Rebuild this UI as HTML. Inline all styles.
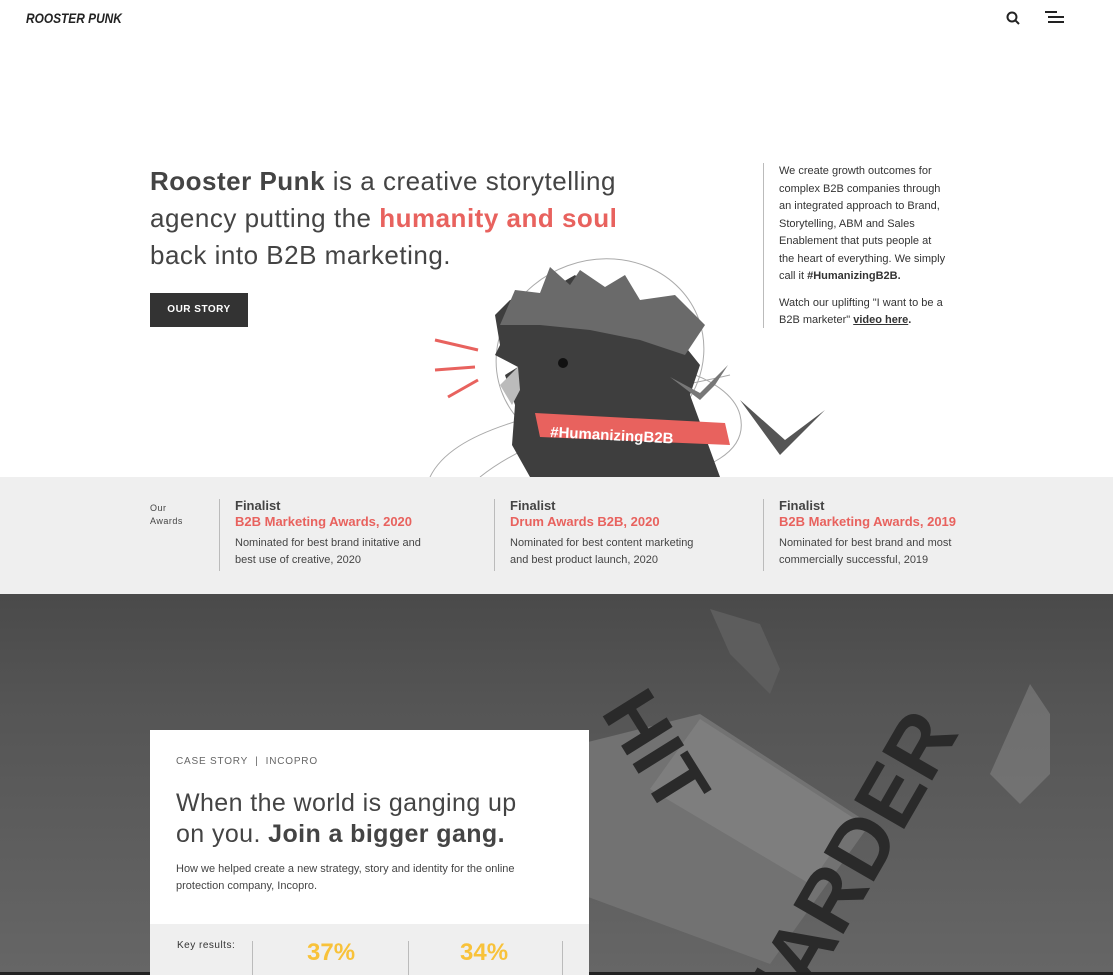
<!DOCTYPE html>
<html><head><meta charset="utf-8"><style>
*{margin:0;padding:0;box-sizing:border-box}
html{width:1113px;height:975px;overflow:hidden}
body{width:1113px;height:975px;overflow:hidden;background:#fff;font-family:"Liberation Sans",sans-serif;color:#444;position:relative}
.abs{position:absolute}
.logo{left:26px;top:10px;font-weight:bold;font-style:italic;font-size:14px;color:#222;transform:scaleX(.85);transform-origin:left}
h1{position:absolute;left:150px;top:163px;font-size:26px;font-weight:normal;line-height:37px;color:#444;white-space:nowrap;letter-spacing:.5px}
h1 b{font-weight:bold}
.red{color:#e8625e}
.btn{left:150px;top:293px;width:98px;height:34px;background:#333;color:#fff;font-size:10px;font-weight:bold;text-align:center;line-height:34px;letter-spacing:.5px}
.side{left:763px;top:163px;border-left:1px solid #bbb;padding-left:15px;width:210px;height:165px;font-size:11px;line-height:17.5px;color:#333;white-space:nowrap}
.awards{left:0;top:477px;width:1113px;height:117px;background:#efefef}
.aw{position:absolute;top:22px;border-left:1px solid #bbb;padding-left:15px;height:72px;font-size:11px;line-height:17px;color:#444;white-space:nowrap}
.aw .t{font-size:13px;font-weight:bold;color:#444;line-height:16px;margin-top:-1px}
.aw .s{font-size:13px;font-weight:bold;color:#e8625e;line-height:16px;margin-bottom:5px}
.dark{left:0;top:594px;width:1113px;height:381px;background:linear-gradient(180deg,#4a4a4a 0,#555 30%,#666 100%)}
.card{left:150px;top:730px;width:439px;height:245px;background:#fff;overflow:hidden}
.kr{left:150px;top:924px;width:439px;height:51px;background:#efefef;overflow:hidden}
</style></head><body>
<div class="abs logo">ROOSTER PUNK</div>
<svg class="abs" style="left:1005px;top:10px" width="16" height="16" viewBox="0 0 16 16"><circle cx="7" cy="7" r="4.5" fill="none" stroke="#222" stroke-width="2"/><line x1="10" y1="10" x2="14" y2="14" stroke="#222" stroke-width="2"/></svg>
<svg class="abs" style="left:1045px;top:10px" width="20" height="14"><rect x="0" y="1" width="12" height="2" fill="#222"/><rect x="3" y="6" width="16" height="2" fill="#222"/><rect x="3" y="11" width="16" height="2" fill="#222"/></svg>

<h1><b>Rooster Punk</b> is a creative storytelling<br>agency putting the <b class="red">humanity and soul</b><br>back into B2B marketing.</h1>
<div class="abs btn">OUR STORY</div>
<div class="abs side">We create growth outcomes for<br>complex B2B companies through<br>an integrated approach to Brand,<br>Storytelling, ABM and Sales<br>Enablement that puts people at<br>the heart of everything. We simply<br>call it <b>#HumanizingB2B.</b><div style="margin-top:9px">Watch our uplifting "I want to be a<br>B2B marketer" <b><u>video here</u>.</b></div></div>

<svg class="abs" style="left:400px;top:255px" width="460" height="222" viewBox="0 0 460 222">
<g fill="none" stroke="#aaa" stroke-width="1">
<ellipse cx="200" cy="100" rx="105" ry="95" transform="rotate(-20 200 100)"/>
<path d="M30 222 C60 160 200 150 330 120"/>
<path d="M180 130 C240 90 330 120 340 160 C350 200 300 215 270 222"/>
<path d="M80 222 C120 190 180 170 230 160"/>
</g>
<path d="M100 90 L95 60 L110 45 L140 40 L175 20 L200 45 L260 60 L300 110 L290 140 L320 222 L130 222 L112 190 L115 150 L105 120 L118 112 L95 100 Z" fill="#3e3e3e"/>
<path d="M100 70 L115 35 L140 38 L150 12 L170 30 L180 15 L205 32 L225 20 L240 45 L275 40 L305 70 L285 100 L240 85 L190 75 L140 70 Z" fill="#6a6a6a"/>
<path d="M118 112 L100 130 L112 150 L120 135 Z" fill="#bbb"/>
<circle cx="163" cy="108" r="5" fill="#111"/>
<g stroke="#e8625e" stroke-width="3"><line x1="78" y1="95" x2="35" y2="85"/><line x1="75" y1="112" x2="35" y2="115"/><line x1="78" y1="125" x2="48" y2="142"/></g>
<path d="M135 158 L325 168 L330 190 L140 182 Z" fill="#e8625e"/>
<text x="150" y="182" font-family="Liberation Sans" font-weight="bold" font-size="15" fill="#fff" transform="rotate(3 150 182)">#HumanizingB2B</text>
<path d="M270 122 L300 138 L328 110 L315 130 L300 145 Z" fill="#777"/>
<path d="M340 145 L380 200 L425 155 L385 185 Z" fill="#555"/>
</svg>

<div class="abs awards">
<div class="abs" style="left:150px;top:25px;font-size:9px;line-height:13px;letter-spacing:.5px">Our<br>Awards</div>
<div class="aw" style="left:219px"><div class="t">Finalist</div><div class="s">B2B Marketing Awards, 2020</div>Nominated for best brand initative and<br>best use of creative, 2020</div>
<div class="aw" style="left:494px"><div class="t">Finalist</div><div class="s">Drum Awards B2B, 2020</div>Nominated for best content marketing<br>and best product launch, 2020</div>
<div class="aw" style="left:763px"><div class="t">Finalist</div><div class="s">B2B Marketing Awards, 2019</div>Nominated for best brand and most<br>commercially successful, 2019</div>
</div>

<div class="abs dark"></div>
<svg class="abs" style="left:580px;top:594px;overflow:hidden" width="533" height="381">
<path d="M0 150 L120 120 L290 230 L190 370 L0 300 Z" fill="#727272"/>
<path d="M120 125 L275 225 L230 290 L70 195 Z" fill="#7e7e7e"/>
<path d="M130 15 L180 30 L200 75 L190 100 L150 60 Z" fill="#5d5d5d"/>
<text x="0" y="0" font-family="Liberation Sans" font-weight="bold" font-size="78" fill="#2a2a2a" transform="translate(20 118) rotate(58)">HIT</text>
<text x="0" y="0" font-family="Liberation Sans" font-weight="bold" font-size="84" fill="#2a2a2a" transform="translate(200 450) rotate(-60)">HARDER</text>
<path d="M450 90 L470 120 L470 180 L440 210 L410 180 Z" fill="#8a8a8a" opacity=".5"/>
</svg>
<div class="abs" style="left:0;top:972px;width:1113px;height:3px;background:#222"></div>

<div class="abs card">
<div class="abs" style="left:26px;top:26px;font-size:10px;letter-spacing:.8px;color:#666">CASE STORY &nbsp;|&nbsp; INCOPRO</div>
<div class="abs" style="left:26px;top:58px;font-size:25px;line-height:31px;color:#444;white-space:nowrap;letter-spacing:.4px">When the world is ganging up<br>on you. <b>Join a bigger gang.</b></div>
<div class="abs" style="left:26px;top:131px;font-size:11px;line-height:17px;color:#444;white-space:nowrap">How we helped create a new strategy, story and identity for the online<br>protection company, Incopro.</div>
</div>
<div class="abs kr">
<div class="abs" style="left:27px;top:16px;font-size:10px;letter-spacing:.5px;color:#333">Key results:</div>
<div class="abs" style="left:102px;top:17px;width:1px;height:34px;background:#bbb"></div>
<div class="abs" style="left:258px;top:17px;width:1px;height:34px;background:#bbb"></div>
<div class="abs" style="left:412px;top:17px;width:1px;height:34px;background:#bbb"></div>
<div class="abs" style="left:157px;top:15px;font-size:24px;font-weight:bold;color:#f8c23a">37%</div>
<div class="abs" style="left:310px;top:15px;font-size:24px;font-weight:bold;color:#f8c23a">34%</div>
</div>
</body></html>
